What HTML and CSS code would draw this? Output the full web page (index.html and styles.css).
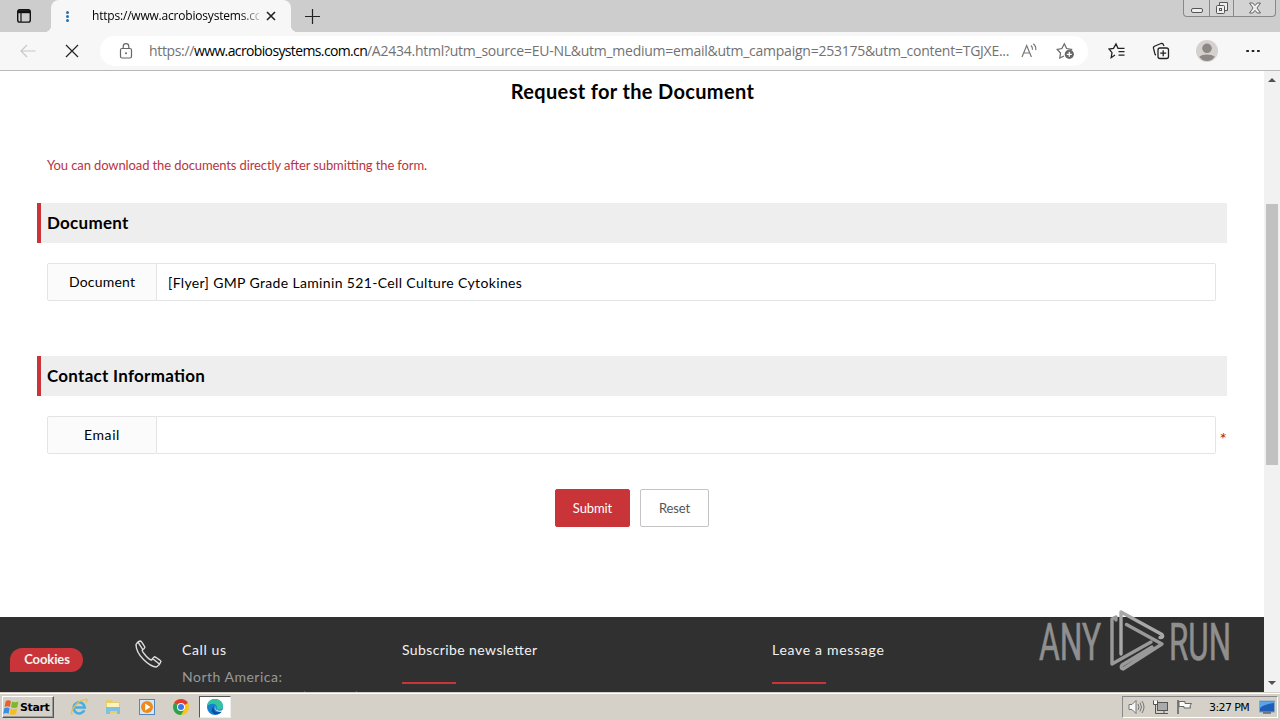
FILE: index.html
```html
<!DOCTYPE html>
<html lang="en">
<head>
<meta charset="utf-8">
<title>Request for the Document</title>
<link rel="stylesheet" href="styles.css">
</head>
<body>
<div class="desktop">
  <header class="tabstrip">
    <svg class="tab-actions" width="16" height="16" viewBox="0 0 16 16"><rect x="1.7" y="1.7" width="12.6" height="12.4" rx="2.2" fill="none" stroke="#111" stroke-width="1.4"/><path d="M2 2.2h12v3H2z" fill="#111"/><path d="M5 5v9" stroke="#111" stroke-width="1.2"/></svg>
    <div class="tab">
      <span class="dots"><i></i><i></i><i></i></span>
      <span class="tab-title">https://www.acrobiosystems.cc</span>
      <svg class="tab-close" width="10" height="10" viewBox="0 0 10 10"><path d="M1 1l8 8M9 1l-8 8" stroke="#222" stroke-width="1.6"/></svg>
    </div>
    <svg class="new-tab" width="15" height="15" viewBox="0 0 15 15"><path d="M7.500 0v15M0 7.500h15" stroke="#222" stroke-width="1.200"/></svg>
    <div class="winctl">
      <span class="wc-min"><svg width="14" height="8" viewBox="0 0 14 8"><rect x="1.5" y="2.5" width="11" height="4" rx="1.5" fill="#eee" stroke="#555"/></svg></span>
      <span class="wc-max"><svg width="14" height="14" viewBox="0 0 14 14"><path d="M4.500 4V1.500h8v8H10" fill="#eee" stroke="#555"/><rect x="1.500" y="4.500" width="8" height="8" rx="1" fill="#eee" stroke="#555"/><rect x="4.500" y="7.500" width="2" height="2" fill="none" stroke="#555"/></svg></span>
      <span class="wc-close"><svg width="14" height="12" viewBox="0 0 14 12"><path d="M1.500 1h3.300L7 3.600 9.200 1h3.300L9 6l3.500 5H9.200L7 8.400 4.800 11H1.500L5 6z" fill="#eee" stroke="#666" stroke-width="1"/></svg></span>
    </div>
  </header>

  <div class="toolbar">
    <svg class="back" width="16" height="14" viewBox="0 0 16 14"><path d="M15.500 7H1M7 1L1 7l6 6" fill="none" stroke="#c8c8c8" stroke-width="1.200"/></svg>
    <svg class="stop" width="14" height="14" viewBox="0 0 14 14"><path d="M1 1l12 12M13 1L1 13" stroke="#222" stroke-width="1.200"/></svg>
    <div class="address">
      <svg class="lock" width="14" height="16" viewBox="0 0 14 16"><rect x="1.500" y="5.500" width="11" height="9.500" rx="1.500" fill="none" stroke="#666" stroke-width="1.200"/><path d="M4.200 5.500V3.500a2.800 2.800 0 0 1 5.600 0v2" fill="none" stroke="#666" stroke-width="1.200"/><circle cx="7" cy="10.300" r="1" fill="#666"/></svg>
      <span class="url"><span class="u1">https://</span><span class="u2">www.acrobiosystems.com.cn</span><span class="u3">/A2434.html?utm_source=EU-NL&amp;utm_medium=email&amp;utm_campaign=253175&amp;utm_content=TGJXE...</span></span>
      <svg class="read" width="17" height="16" viewBox="0 0 17 16"><path d="M1 14L5.700 2.500 10.400 14M2.800 10h5.900" fill="none" stroke="#777" stroke-width="1.200"/><path d="M10 2.500q1.800 1.800 1.500 4.300M12.300.8q3 2.400 2.400 6.400" fill="none" stroke="#777" stroke-width="1.200"/></svg>
      <svg class="fav" width="19" height="18" viewBox="0 0 19 18"><path d="M8 14l-4.200 2 .7-5L1.200 7.300l4.700-.8L8.300 1.800l2.300 4.700 4.900.8-1.600 1.700" fill="none" stroke="#666" stroke-width="1.200"/><circle cx="13.300" cy="12.300" r="4.600" fill="#666"/><path d="M13.300 9.800v5M10.800 12.300h5" stroke="#fff" stroke-width="1.200"/></svg>
    </div>
    <svg class="favs" width="18" height="18" viewBox="0 0 18 18"><path d="M7 13l-3.800 2.700.8-5.100L1 7l4.500-.7L8 2l2 4.300h6.500M10.500 9.700h6M10.500 13.200h6" fill="none" stroke="#222" stroke-width="1.300"/></svg>
    <svg class="coll" width="18" height="18" viewBox="0 0 18 18"><path d="M4 13C2 12.500 2.800 9 1.500 6.500Q1 4.800 3 4L9 1.500q2-.5 2.500 1.500l.5 1" fill="none" stroke="#222" stroke-width="1.300"/><rect x="6" y="6" width="10.500" height="10.500" rx="2" fill="none" stroke="#222" stroke-width="1.300"/><path d="M11.200 8.200v6M8.200 11.200h6" stroke="#222" stroke-width="1.300"/></svg>
    <svg class="avatar" width="22" height="22" viewBox="0 0 22 22"><circle cx="11" cy="11" r="11" fill="#d5d1ce"/><circle cx="11" cy="8.300" r="4.800" fill="#8d8886"/><path d="M3.300 16.500Q6 14.500 11 14.500t7.700 2Q16 21 11 21t-7.700-4.500z" fill="#8d8886"/></svg>
    <svg class="more" width="14" height="4" viewBox="0 0 14 4"><path d="M.3 1h2.600v2H.3zM5.700 1h2.600v2H5.700zM11.100 1h2.600v2h-2.600z" fill="#222"/></svg>
  </div>

  <div class="viewport">
    <div class="page">
      <main class="main">
        <h1 class="title"><span>Request for the Document</span></h1>
        <p class="hint"><span>You can download the documents directly after submitting the form.</span></p>
        <h2 class="section"><span>Document</span></h2>
        <div class="row">
          <label class="label"><span class="l-doc">Document</span></label>
          <div class="input"><span class="value">[Flyer] GMP Grade Laminin 521-Cell Culture Cytokines</span></div>
        </div>
        <h2 class="section second"><span>Contact Information</span></h2>
        <div class="row">
          <label class="label"><span class="l-email">Email</span></label>
          <div class="input"></div>
          <span class="required">*</span>
        </div>
        <div class="buttons">
          <button class="btn submit">Submit</button>
          <button class="btn reset">Reset</button>
        </div>
      </main>
      <footer class="footer">
        <div class="cookies"><span>Cookies</span></div>
        <svg class="phone" width="28" height="28" viewBox="0 0 28 28"><path d="M2 4.500Q4 1 6.500 1q1 .2 4.300 6 .3 1-2.600 3.200-.3 1.200 3.600 5.500t5.800 4.300Q20 16.500 21 16.800q5.700 3.400 6 4.600Q26 25 22.500 27 17 27 9.500 19.500T2 4.500zM4.300 2.700l4.200 6.400M18.500 18.500l6.500 5.300" fill="none" stroke="#ddd" stroke-width="1.400"/></svg>
        <div class="col call"><span class="f-call">Call us</span><span class="f-na">North America:</span><span class="f-phone">+1 800-810-0816 (toll free)</span></div>
        <div class="col news"><span class="f-news">Subscribe newsletter</span><i class="rule"></i></div>
        <div class="col msg"><span class="f-msg">Leave a message</span><i class="rule"></i></div>
      </footer>
    </div>
    <div class="scrollbar">
      <i class="up"></i><i class="thumb"></i><i class="down"></i>
    </div>
    <svg class="watermark" width="200" height="72" viewBox="1036 606 200 72">
      <g class="mark-text">
        <text x="1039" y="660" textLength="62" lengthAdjust="spacingAndGlyphs">ANY</text>
        <text x="1169" y="660" textLength="62" lengthAdjust="spacingAndGlyphs">RUN</text>
      </g>
      <g class="mark-logo">
        <path d="M1121 654V612L1162 634.500q2 3-2 3"/><path d="M1116 620V617L1112 619V664L1151 642"/><path d="M1126.500 624.500L1162 644L1123 669q-3-1-1-4L1152 647"/>
      </g>
    </svg>
  </div>

  <div class="taskbar">
    <div class="start"><svg width="17" height="17" viewBox="0 0 16 16"><path d="M2.500 2Q5 .5 7.500 2L6.500 7.500Q4 6 1.500 7.500z" fill="#e8622c"/><path d="M8.500 2.300q2.500 1.500 6 0L13.500 7.800q-3 1.500-6 0z" fill="#7db928"/><path d="M1.200 8.800Q4 7.200 6.200 8.800L5.200 14Q3 12.500 .2 14z" fill="#3b8ede"/><path d="M7.300 9q2.500 1.500 6 0l-1 5.200q-3 1.400-6-.2z" fill="#f8bd1c"/></svg><span>Start</span></div>
    <svg class="ql ie" width="18" height="18" viewBox="0 0 18 18"><path d="M14.300 12.300A5.600 5.600 0 1 1 14.800 9.500H5" fill="none" stroke="#48aee2" stroke-width="2.600"/><path d="M2.500 16.500Q-.5 15 5 8T17 1.500q.5 1-1 3" fill="none" stroke="#e5bf50" stroke-width="1.300"/></svg>
    <svg class="ql folder" width="18" height="18" viewBox="0 0 18 18"><path d="M2 2h6l1 2h7v11H2z" fill="#e9cd6d"/><path d="M3 5h12v4H3z" fill="#fff3bd"/><path d="M2 9h14v7h-3v-3H6v3H2z" fill="#7fc2df"/></svg>
    <svg class="ql media" width="18" height="18" viewBox="0 0 18 18"><rect x="1.500" y="1.500" width="15" height="15" fill="#d6e8f7" stroke="#5189bf"/><circle cx="9" cy="9" r="6" fill="#ee8a19"/><path d="M7.200 5.500v7L12.500 9z" fill="#fff"/></svg>
    <svg class="ql chrome" width="18" height="18" viewBox="0 0 18 18"><circle cx="9" cy="9" r="8" fill="#f9c518"/><path d="M9 9L2.100 5A8 8 0 0 1 15.900 5z" fill="#df3e30"/><path d="M9 9L2.100 5A8 8 0 0 0 9 17l3.500-6z" fill="#2da14c"/><circle cx="9" cy="9" r="4" fill="#fff"/><circle cx="9" cy="9" r="3" fill="#3b78e7"/></svg>
    <div class="active"><svg width="18" height="18" viewBox="0 0 18 18"><circle cx="9" cy="9" r="8" fill="#1580cf"/><path d="M1 8Q2 1 9 1q7.500.5 8 7 0 3.500-3.500 3.800-2.500 0-3-1.300 1-1.500-.5-3.500Q6.500 4 1 8z" fill="#36c3a0"/><path d="M8 8q-1.500 4 2 6 3 1 6-1 1-.3-.5 1-3 3-7 2Q3 13 8 8z" fill="#0b4d9c"/><path d="M9.500 7.500q-1.500 4 2.500 5 3 .7 5.500-1V14L12 13.500Q7 11 9.500 7.500z" fill="#fff"/></svg></div>
    <div class="tray">
      <svg width="17" height="16" viewBox="0 0 17 16"><path d="M1 5.500h3L8 1.500v13l-4-4H1z" fill="#f8f8f8" stroke="#777"/><path d="M10 5q2 3 0 6M12 3.500q3 4.500 0 9M14 2q4 6 0 12" fill="none" stroke="#777"/></svg>
      <svg width="17" height="16" viewBox="0 0 17 16"><rect x="5.500" y="3.500" width="10" height="8" fill="#aaa" stroke="#555"/><path d="M8 14.500h8M12 12v2" stroke="#555"/><path d="M1.500 1.500v4h4v-4M3.500 6v8.500H8" fill="none" stroke="#555"/><path d="M2 2h3v3H2z" fill="#fff"/></svg>
      <svg width="17" height="16" viewBox="0 0 17 16"><path d="M2 1v14" stroke="#666" stroke-width="1.600"/><path d="M3 2.500h6v2h6.500Q13 7 14.500 9H8V7.500H3z" fill="#fafafa" stroke="#666"/></svg>
      <span class="clock">3:27 PM</span>
      <svg width="16" height="14" viewBox="0 0 16 14"><rect x=".5" y="1" width="15" height="11" fill="#1d5fb8" stroke="#89a4c5"/><path d="M1 8q5-4 14-5V1.500H1z" fill="#59a4ea"/><path d="M4 13h8" stroke="#333"/></svg>
    </div>
  </div>
</div>
</body>
</html>
```
FILE: styles.css
```css
* { box-sizing: border-box; }
body { margin: 0; font-family: Lato, Carlito, "Liberation Sans", sans-serif; font-feature-settings: "liga" 1; color: #000; }
svg { display: block; flex: none; }
.desktop { width: 1280px; height: 720px; overflow: hidden; display: flex; flex-direction: column; background: #fff; }
span { white-space: nowrap; }

.tabstrip { height: 32px; flex: none; background: #cdcdcd; display: flex; align-items: center; }
.tab-actions { margin-left: 16px; }
.tab { position: relative; margin-left: 19px; width: 240px; height: 32px; background: #f7f7f7; border-radius: 8px 8px 0 0; display: flex; align-items: center; }
.tab::before, .tab::after { content: ""; position: absolute; bottom: 0; width: 7px; height: 7px; }
.tab::before { left: -7px; background: radial-gradient(circle at 0 0, #cdcdcd 7px, #f7f7f7 7.5px); }
.tab::after { right: -7px; background: radial-gradient(circle at 100% 0, #cdcdcd 7px, #f7f7f7 7.5px); }
.dots { margin-left: 15px; width: 4px; display: flex; flex-direction: column; gap: 1px; }
.dots i { width: 3px; height: 3px; border-radius: 50%; background: #286fae; }
.tab-title { margin-left: 22px; width: 167px; font: 12px/18px "Open Sans", "Noto Sans", sans-serif; letter-spacing: -.2px; -webkit-mask-image: linear-gradient(90deg, #000 148px, transparent 172px); }
.tab-close { margin-left: 7px; }
.new-tab { margin-left: 14px; }
.winctl { margin-left: auto; margin-right: 4px; align-self: flex-start; width: 93px; height: 17px; border: 1px solid #888; border-top: 0; border-radius: 0 0 4px 4px; display: flex; background: #d3d3d3; }
.winctl span { display: flex; align-items: center; justify-content: center; height: 16px; }
.wc-min { width: 25px; padding-top: 4px; }
.wc-max { width: 25px; border-left: 1px solid #888; border-right: 1px solid #888; }
.wc-close { flex: 1; }

.toolbar { height: 39px; flex: none; background: #f7f7f7; border-bottom: 1px solid #b9b9b9; display: flex; align-items: center; }
.back { margin-left: 20px; }
.stop { margin-left: 29px; }
.address { margin-left: 21px; width: 988px; height: 30px; border-radius: 15px; background: #fff; display: flex; align-items: center; }
.lock { margin-left: 19px; }
.url { margin-left: 16px; width: 860px; display: flex; font: 14px/20px "Open Sans", "Noto Sans", sans-serif; color: #727272; }
.u1 { width: 45px; letter-spacing: -.35px; }
.u2 { width: 173px; color: #000; letter-spacing: -.63px; }
.u3 { letter-spacing: -.25px; }
.read { margin-left: 12px; }
.fav { margin-left: 18px; }
.favs { margin-left: 20px; }
.coll { margin-left: 26px; }
.avatar { margin-left: 26px; }
.more { margin-left: 28px; }

.viewport { position: relative; height: 621px; flex: none; display: flex; overflow: hidden; }
.page { width: 1264px; display: flex; flex-direction: column; }
.main { height: 546px; flex: none; padding: 6px 37px 0; }
.title { margin: 0; height: 28px; font-size: 20px; line-height: 28px; text-align: center; font-weight: 700; padding-left: 1px; letter-spacing: .34px; }
.hint { margin: 50px 0 0 10px; height: 20px; line-height: 20px; font-size: 13px; color: #b9353f; letter-spacing: -.11px; }
.section { margin: 28px 0 0; height: 40px; background: #eee; border-left: 4px solid #c93438; padding-left: 6px; font-size: 17px; line-height: 40px; font-weight: 700; letter-spacing: .27px; }
.second { margin-top: 55px; }
.row { margin: 20px 0 0 10px; display: flex; height: 38px; }
.label { width: 110px; border: 1px solid #e4e4e4; border-radius: 2px 0 0 2px; background: #fbfbfb; text-align: center; font-size: 14px; line-height: 36px; }
.l-doc { letter-spacing: .2px; }
.l-email { letter-spacing: .6px; }
.input { width: 1059px; border: 1px solid #e4e4e4; border-left: 0; border-radius: 0 2px 2px 0; padding-left: 11px; font-size: 14px; line-height: 38px; }
.value { letter-spacing: .35px; }
.required { margin-left: 3px; color: #c02020; font-size: 18px; line-height: 46px; font-style: italic; height: 38px; }
.buttons { margin-top: 35px; display: flex; justify-content: center; gap: 10px; }
.btn { height: 38px; padding: 0; font: 13px/36px Lato, sans-serif; border-radius: 2px; }
.submit { width: 75px; border: 1px solid #c93438; background: #c93438; color: #fff; letter-spacing: -.1px; padding-bottom: 2px; }
.reset { width: 69px; border: 1px solid #c4c4c4; background: #fff; color: #555; letter-spacing: -.1px; }

.footer { height: 75px; flex: none; background: #303030; display: flex; align-items: flex-start; overflow: hidden; color: #f2f2f2; font-size: 14px; }
.cookies { margin: 31px 0 0 10px; width: 73px; height: 24px; background: #c93438; border-radius: 12px 12px 12px 0; text-align: center; font-weight: 700; font-size: 13px; line-height: 23px; letter-spacing: -.1px; padding-left: 1px; }
.phone { margin: 23px 0 0 51px; }
.col { display: flex; flex-direction: column; align-items: flex-start; padding-top: 23px; line-height: 20px; }
.call { margin-left: 20px; width: 220px; }
.news { width: 370px; }
.f-call { letter-spacing: .6px; }
.f-na { margin-top: 7px; color: #999; letter-spacing: .5px; }
.f-phone { color: #ccc; letter-spacing: .3px; }
.f-news { letter-spacing: .4px; }
.f-msg { letter-spacing: .7px; }
.rule { margin-top: 22px; width: 54px; height: 2px; background: #c93438; }

.scrollbar { width: 16px; background: #f1f1f1; display: flex; flex-direction: column; align-items: center; }
.up { margin-top: 7px; border: 4px solid transparent; border-top: 0; border-bottom: 4px solid #505050; }
.thumb { margin-top: 122px; width: 12px; height: 261px; background: #c1c1c1; }
.down { margin-top: auto; margin-bottom: 7px; border: 4px solid transparent; border-bottom: 0; border-top: 4px solid #505050; }
.watermark { position: absolute; left: 1036px; top: 535px; }
.mark-text { fill: #8f8f8f; stroke: #8f8f8f; stroke-width: .7px; font-family: Roboto, sans-serif; font-size: 52px; }
.mark-logo { fill: none; stroke: #999; stroke-width: 3.4px; stroke-linejoin: round; stroke-linecap: round; }
.mark-logo path:first-child { stroke: #a8a8a8; }

.taskbar { height: 28px; flex: none; background: #d5d0c8; border-top: 1px solid #d5d0c8; box-shadow: inset 0 1px #fff; display: flex; align-items: center; padding-top: 1px; }
.start { margin-left: 2px; width: 52px; height: 22px; border: 1px solid #fff; border-right-color: #555; border-bottom-color: #555; box-shadow: inset -1px -1px #999; display: flex; align-items: center; font: 700 11px/18px "DejaVu Sans", sans-serif; letter-spacing: -.4px; }
.start span { padding-top: 1px; }
.ie { margin-left: 16px; }
.folder, .media, .chrome { margin-left: 16px; }
.active { margin-left: 9px; width: 32px; height: 22px; background: #fff; border: 1px solid #555; border-right-color: #eee; border-bottom-color: #eee; display: flex; align-items: center; justify-content: center; }
.tray { margin-left: auto; margin-right: 2px; width: 156px; height: 22px; border: 1px solid #888; border-right-color: #fff; border-bottom-color: #fff; display: flex; align-items: center; padding-left: 5px; gap: 7px; }
.clock { margin-left: 9px; width: 43px; padding-top: 1px; font: 11px/18px "DejaVu Sans", sans-serif; letter-spacing: -.6px; }
```
